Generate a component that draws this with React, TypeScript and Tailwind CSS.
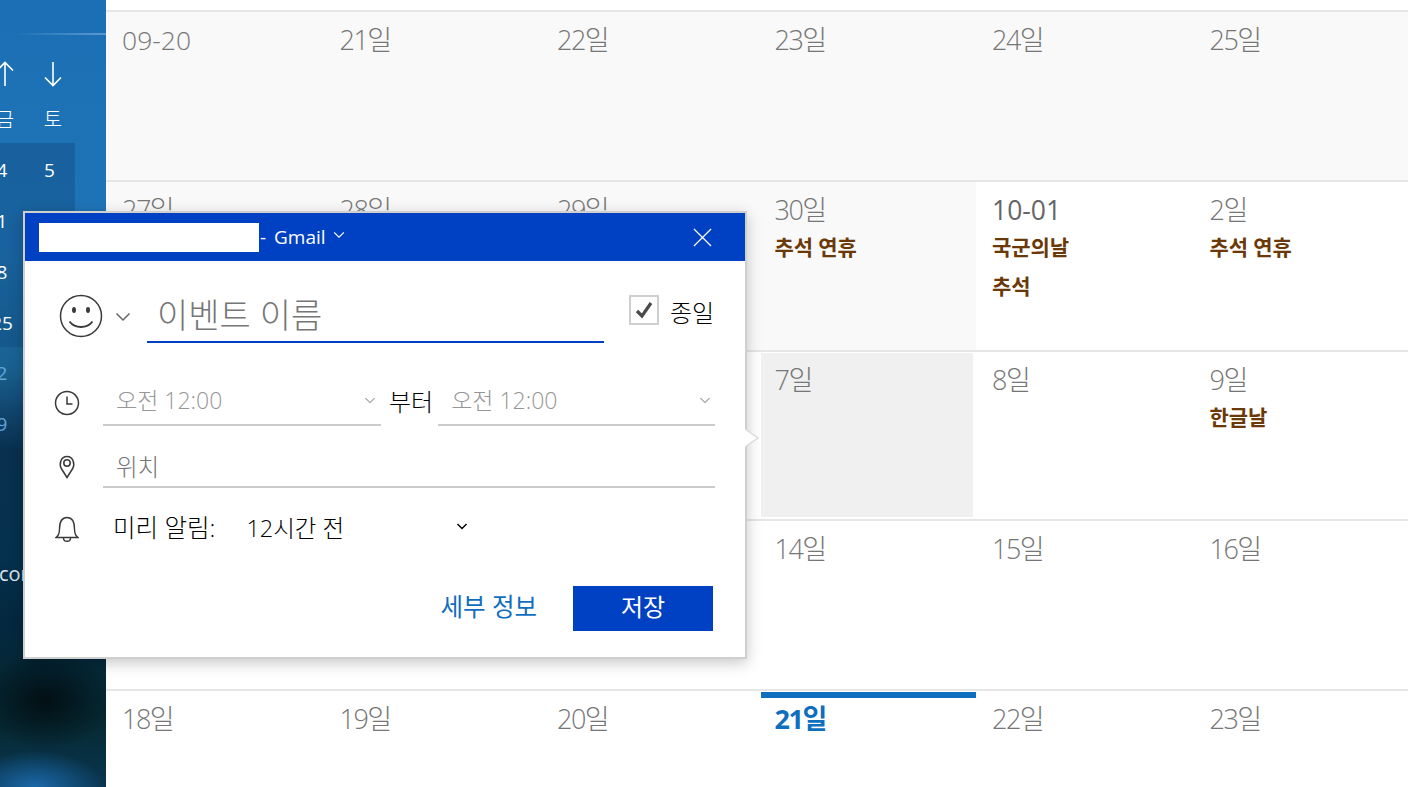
import React from "react";

const font = "[font-family:'Open_Sans','Noto_Sans_CJK_KR',sans-serif]";

type Cell = { d: string; h?: string[]; strong?: boolean; today?: boolean; sel?: boolean; white?: boolean };

const rows: { cells: Cell[]; h: string }[] = [
  { h: "h-[170px]", cells: [{ d: "09-20" }, { d: "21일" }, { d: "22일" }, { d: "23일" }, { d: "24일" }, { d: "25일" }] },
  { h: "h-[170px]", cells: [{ d: "27일" }, { d: "28일" }, { d: "29일" }, { d: "30일", h: ["추석 연휴"] }, { d: "10-01", strong: true, white: true, h: ["국군의날", "추석"] }, { d: "2일", white: true, h: ["추석 연휴"] }] },
  { h: "h-[169px]", cells: [{ d: "4일", white: true }, { d: "5일", white: true }, { d: "6일", white: true }, { d: "7일", sel: true, white: true }, { d: "8일", white: true }, { d: "9일", white: true, h: ["한글날"] }] },
  { h: "h-[170px]", cells: [{ d: "11일", white: true }, { d: "12일", white: true }, { d: "13일", white: true }, { d: "14일", white: true }, { d: "15일", white: true }, { d: "16일", white: true }] },
  { h: "h-[98px]", cells: [{ d: "18일", white: true }, { d: "19일", white: true }, { d: "20일", white: true }, { d: "21일", today: true, white: true }, { d: "22일", white: true }, { d: "23일", white: true }] },
];

function Chevron({ className, color = "currentColor", w = 1.5 }: { className: string; color?: string; w?: number }) {
  return (
    <svg viewBox="0 0 16 10" className={className} fill="none" stroke={color} strokeWidth={w}>
      <path d="M1.5 1.5 8 8l6.5-6.5" />
    </svg>
  );
}

function DayCell({ c }: { c: Cell }) {
  const isDay = c.d.endsWith("일");
  return (
    <div className={`relative h-full min-w-0 pl-[16px] ${c.white ? "bg-white" : ""}`}>
      {c.today && <div className="absolute left-[2px] right-[-1px] top-[1px] h-[6px] bg-[#106ebe]" />}
      {c.sel && <div className="absolute left-[2px] right-[3px] top-[1px] bottom-[2px] bg-[#f0f0f0]" />}
      <div
        className={`relative pt-[11px] leading-[34px] ${
          isDay ? "text-[27px] tracking-[-1.5px]" : "text-[26.5px] tracking-[0px]"
        } ${c.today ? "font-bold text-[#106ebe]" : c.strong ? "font-normal text-[#666666]" : "font-light text-[#767676]"}`}
      >
        {c.d}
      </div>
      {c.h && (
        <div className="relative mt-[1px] flex flex-col">
          {c.h.map((t) => (
            <div key={t} className="h-[39px] text-[21px] leading-[38px] font-bold tracking-[-0.1px] text-[#6b3808]">
              {t}
            </div>
          ))}
        </div>
      )}
    </div>
  );
}

function Sidebar() {
  const nums = [["4", "5"], ["1", ""], ["8", ""], ["25", ""]];
  return (
    <div className="flex h-[787px] w-[106px] shrink-0 flex-col overflow-hidden bg-[radial-gradient(70px_36px_at_35px_787px,#1a68a8,transparent),radial-gradient(70px_50px_at_45px_700px,#020f14,transparent),linear-gradient(180deg,#1c6fb4_0px,#1f74b7_250px,#1b6ca4_300px,#19608f_370px,#11466f_410px,#09304f_450px,#05304e_560px,#04283f_620px,#062a33_720px,#0a3550_787px)] text-white">
      <div className="mt-[33px] h-[2px] w-full bg-[linear-gradient(90deg,transparent_15%,#5b9ad0_100%)]" />
      <div className="-ml-[19px] flex h-[73px] w-[125px] items-center pt-[5px]">
        {[0, 1].map((i) => (
          <div key={i} className="flex w-[48px] justify-center">
            <svg viewBox="0 0 18 26" className={`h-[26px] w-[18px] ${i === 0 ? "" : "rotate-180"}`} fill="none" stroke="#fff" strokeWidth="1.6">
              <path d="M9 25V1.500M1 9.500l8-8 8 8" />
            </svg>
          </div>
        ))}
      </div>
      <div className="-ml-[19px] flex h-[35px] w-[125px] items-start text-[20px] leading-[24px] font-light">
        <div className="w-[48px] text-center">금</div>
        <div className="w-[48px] text-center">토</div>
      </div>
      <div className="w-[75px] overflow-hidden bg-[#10497a]/40">
        {nums.map((r, i) => (
          <div key={i} className="-ml-[22px] flex h-[51px] w-[96px] items-center pt-[4px] text-[19px] font-medium">
            <div className="w-[48px] text-center">{r[0]}</div>
            <div className="w-[47px] text-center">{r[1]}</div>
          </div>
        ))}
      </div>
      <div className="w-[75px] overflow-hidden">
        {["2", "9"].map((n) => (
          <div key={n} className="-ml-[22px] flex h-[51px] w-[96px] items-center pt-[2px] text-[19px] font-normal text-[#5fa6dc]">
            <div className="w-[48px] text-center">{n}</div>
          </div>
        ))}
      </div>
      <div className="-ml-[1px] mt-[111px] text-[20px] leading-[28px] text-[#dce8f0]">com</div>
    </div>
  );
}

function Popover() {
  return (
    <div className="absolute left-[23px] top-[211px] h-[448px] w-[724px] border-2 border-[#cfcfcf] bg-white shadow-[0_4px_14px_rgba(0,0,0,0.22)]">
      <svg viewBox="0 0 14 20" className="absolute left-[720px] top-[215px] h-[20px] w-[14px]" fill="#fff" stroke="#dcdcdc" strokeWidth="1.500">
        <path d="M0 1l13 9L0 19" />
      </svg>
      <div className="flex h-[48px] items-center bg-[#0041c4] pl-[14px] pr-[33px] text-white">
        <div className="h-[29px] w-[220px] bg-white" />
        <span className="ml-[1px] text-[19px] leading-[24px] [word-spacing:3px]">- Gmail</span>
        <Chevron className="mb-[5px] ml-[7px] h-[8px] w-[12px]" />
        <svg viewBox="0 0 20 20" className="ml-auto h-[19px] w-[19px]" fill="none" stroke="#fff" strokeWidth="1.300">
          <path d="M1 1l18 18M19 1 1 19" />
        </svg>
      </div>

      <div className="relative flex h-[82px] items-start pl-[34px]">
        <svg viewBox="0 0 44 44" className="mt-[33px] h-[44px] w-[44px]" fill="none" stroke="#3a3a3a" strokeWidth="1.500">
          <circle cx="22" cy="22" r="20.500" />
          <ellipse cx="15" cy="16" rx="2" ry="3" fill="#3a3a3a" stroke="none" />
          <ellipse cx="29" cy="16" rx="2" ry="3" fill="#3a3a3a" stroke="none" />
          <path d="M10.500 27.500c3 4 7 5.500 11.500 5.500s8.500-1.500 11.500-5.500" strokeWidth="1.800" />
        </svg>
        <Chevron className="ml-[12px] mt-[51px] h-[10px] w-[16px]" color="#666" />
        <div className="ml-[16px] mt-[22px] h-[60px] w-[457px] border-b-2 border-[#0041c4] pl-[10px] pt-[10px] text-[34px] leading-[44px] font-light text-[#767676]">
          이벤트 이름
        </div>
        <div className="ml-[25px] mt-[34px] flex h-[30px] w-[30px] items-center justify-center border-2 border-[#cfcfcf]">
          <svg viewBox="0 0 20 20" className="h-[20px] w-[20px]" fill="none" stroke="#4a4a4a" strokeWidth="3.200">
            <path d="M3 11l5 5L17 3" />
          </svg>
        </div>
        <div className="ml-[11px] mt-[35px] text-[24px] leading-[34px] font-light text-black">종일</div>
      </div>

      <div className="mt-[35px] flex h-[47px] items-start pl-[29px]">
        <svg viewBox="0 0 26 26" className="mt-[12px] h-[26px] w-[26px]" fill="none" stroke="#3a3a3a" strokeWidth="1.500">
          <circle cx="13" cy="13" r="11.500" />
          <path d="M13 6.500V14h5.500" />
        </svg>
        <div className="ml-[23px] flex h-[48px] w-[278px] items-center justify-between border-b-2 border-[#cccccc] pb-[2px] pl-[13px] pr-[5px] text-[23px] font-light text-[#969696]">
          <span>오전 12:00</span>
          <Chevron className="h-[7px] w-[12px]" color="#999" />
        </div>
        <div className="ml-[8px] mt-[7px] text-[24px] leading-[34px] font-light text-black">부터</div>
        <div className="ml-[5px] flex h-[48px] w-[277px] items-center justify-between border-b-2 border-[#cccccc] pb-[2px] pl-[13px] pr-[4px] text-[23px] font-light text-[#969696]">
          <span>오전 12:00</span>
          <Chevron className="h-[7px] w-[12px]" color="#999" />
        </div>
      </div>

      <div className="mt-[14px] flex h-[49px] items-start pl-[33px]">
        <svg viewBox="0 0 18 24" className="mt-[16px] h-[24px] w-[18px]" fill="none" stroke="#3a3a3a" strokeWidth="1.500">
          <path d="M9 22.500 3.300 13.500C1 9.500 2.500 1.500 9 1.500s8 8 5.700 12z" />
          <circle cx="9" cy="8" r="3.200" />
        </svg>
        <div className="ml-[27px] flex h-[49px] w-[612px] items-center border-b-2 border-[#cccccc] pl-[13px] pt-[11px] text-[23.500px] font-light text-[#767676]">
          위치
        </div>
      </div>

      <div className="mt-[25px] flex h-[46px] items-start pl-[30px]">
        <svg viewBox="0 0 24 26" className="mt-[3px] h-[26px] w-[24px]" fill="none" stroke="#3a3a3a" strokeWidth="1.400">
          <path d="M1 21.500c3-2 3.500-4 3.500-8.500C4.500 6 7 1.500 12 1.500S19.500 6 19.500 13c0 4.500.5 6.500 3.500 8.500z" />
          <path d="M8.500 22c0 2.500 1.500 3.300 3.500 3.300s3.500-.8 3.500-3.300" />
        </svg>
        <div className="ml-[34px] text-[24.500px] leading-[30px] font-light text-black">미리 알림:</div>
        <div className="ml-[31px] text-[23.500px] leading-[30px] font-light text-black">12시간 전</div>
        <Chevron className="ml-[112px] mt-[10px] h-[7px] w-[12px]" color="#000" w={2} />
      </div>

      <div className="mt-[27px] flex items-center justify-end pr-[32px]">
        <span className="mr-[36px] pb-[3px] text-[24.500px] leading-[30px] font-normal text-[#106ebe]">세부 정보</span>
        <div className="flex h-[45px] w-[140px] items-center justify-center bg-[#0041c4] pb-[3px] text-[24px] font-normal text-white">저장</div>
      </div>
    </div>
  );
}

export default function App() {
  return (
    <div className={`relative flex h-[787px] w-[1408px] overflow-hidden bg-white ${font}`}>
      <Sidebar />
      <div className="min-w-0 flex-1 pt-[10px]">
        {rows.map((r, i) => (
          <div key={i} className={`grid w-[1305px] grid-cols-[repeat(6,217.5px)] border-t-2 border-[#e6e6e6] bg-[#f9f9f9] ${r.h}`}>
            {r.cells.map((c, j) => (
              <DayCell key={j} c={c} />
            ))}
          </div>
        ))}
      </div>
      <Popover />
    </div>
  );
}
